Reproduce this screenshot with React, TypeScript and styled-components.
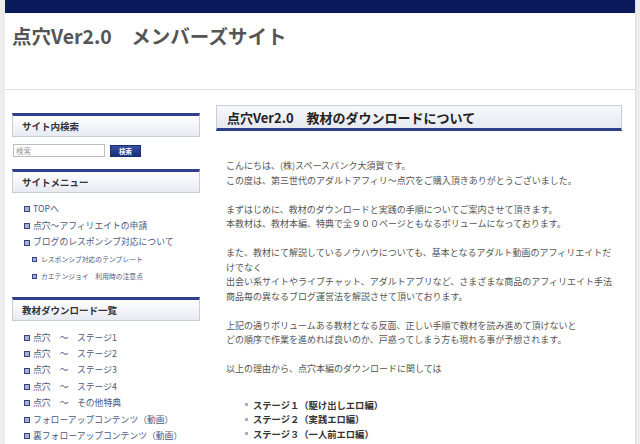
import React from "react";
import styled, { createGlobalStyle } from "styled-components";

const GlobalStyle = createGlobalStyle`
  html, body { margin: 0; padding: 0; }
  body {
    background: #ececec;
    font-family: "Noto Sans CJK JP", "Noto Sans", sans-serif;
  }
  * { box-sizing: border-box; }
`;

const Page = styled.div`
  width: 631px;
  margin-left: 5px;
  min-height: 444px;
  background: #fff;
  border-right: 1px solid #dedede;
  overflow: hidden;
`;

const TopBar = styled.div`
  height: 13px;
  background: #0b1a5b;
`;

const Header = styled.header`
  height: 77px;
  border-bottom: 1px solid #dddddd;
  padding: 12px 0 0 7px;
`;

const SiteTitle = styled.h1`
  margin: 0;
  font-size: 19.5px;
  line-height: 22px;
  font-weight: bold;
  color: #555;
`;

const Body = styled.div`
  display: flex;
  gap: 16px;
  padding: 0 14px 0 7px;
`;

const Sidebar = styled.aside`
  width: 188px;
  flex: none;
  padding-top: 23px;
`;

const SideHeading = styled.h2<{ $mt?: number }>`
  margin: ${(p) => p.$mt ?? 0}px 0 0;
  height: 24px;
  border: 1px solid #c9cdd8;
  border-top: 3px solid #2d3f8c;
  background: linear-gradient(#ffffff, #e7eaf2);
  padding-left: 9px;
  display: flex;
  align-items: center;
  font-size: 9.5px;
  font-weight: bold;
  color: #333;
`;

const SearchRow = styled.div`
  display: flex;
  align-items: center;
  gap: 5px;
  margin: 7px 0 0 1px;
`;

const SearchInput = styled.input`
  width: 92px;
  height: 13px;
  border: 1px solid #bdbdbd;
  padding: 0 2px;
  font-family: inherit;
  font-size: 7.5px;
  color: #333;
  &::placeholder { color: #999; }
`;

const SearchButton = styled.button`
  width: 31px;
  height: 12px;
  padding: 0;
  border: 1px solid #1a2c70;
  background: linear-gradient(#3550a3, #1b2f7a);
  color: #fff;
  font-family: inherit;
  font-size: 6.5px;
  font-weight: bold;
  line-height: 10px;
`;

const MenuList = styled.ul<{ $pt: number; $lh: number }>`
  list-style: none;
  margin: 0;
  padding: ${(p) => p.$pt}px 0 0 0;
  & > li { line-height: ${(p) => p.$lh}px; }
`;

const Bullet = styled.span`
  display: inline-block;
  width: 6px;
  height: 6px;
  border: 1.5px solid #34457e;
  background: #a7b1cf;
  margin-right: 4px;
  vertical-align: 0px;
  flex: none;
`;

const MenuItem = styled.li<{ $sub?: boolean }>`
  display: flex;
  align-items: center;
  padding-left: ${(p) => (p.$sub ? 20 : 12)}px;
  font-size: ${(p) => (p.$sub ? 6.8 : 8.8)}px;
  color: #4b5882;
  white-space: nowrap;
  & > ${Bullet} {
    width: ${(p) => (p.$sub ? 5 : 6)}px;
    height: ${(p) => (p.$sub ? 5 : 6)}px;
    margin-right: ${(p) => (p.$sub ? 4 : 3)}px;
  }
`;

const Main = styled.main`
  width: 406px;
  flex: none;
  padding-top: 15px;
`;

const MainHeading = styled.h2`
  margin: 0;
  height: 26px;
  border: 1px solid #c9ccd6;
  border-bottom: 3px solid #2c3f8c;
  background: linear-gradient(#f7f8fb, #e6e9f1);
  padding-left: 10px;
  display: flex;
  align-items: center;
  font-size: 13px;
  font-weight: bold;
  color: #222;
`;

const Article = styled.div`
  width: 402px;
  padding: 28px 0 0 10px;
  font-size: 9px;
  line-height: 14.5px;
  color: #555;
`;

const Para = styled.p`
  margin: 0 0 14.5px;
`;

const StageList = styled.ul`
  list-style: none;
  margin: 21px 0 0;
  padding: 0 0 0 19px;
`;

const StageItem = styled.li`
  display: flex;
  align-items: center;
  line-height: 14.5px;
  font-size: 9.3px;
  font-weight: bold;
  color: #333;
  &::before {
    content: "";
    width: 3px;
    height: 3px;
    background: #b0b0b0;
    margin-right: 5px;
  }
`;

const siteMenu: { label: string; sub?: boolean }[] = [
  { label: "TOPへ" },
  { label: "点穴〜アフィリエイトの申請" },
  { label: "ブログのレスポンシブ対応について" },
  { label: "レスポンシブ対応のテンプレート", sub: true },
  { label: "カエテンジョイ　利用時の注意点", sub: true },
];

const downloads = [
  "点穴　〜　ステージ1",
  "点穴　〜　ステージ2",
  "点穴　〜　ステージ3",
  "点穴　〜　ステージ4",
  "点穴　〜　その他特典",
  "フォローアップコンテンツ（動画）",
  "裏フォローアップコンテンツ（動画）",
];

const stages = [
  "ステージ１（駆け出しエロ編）",
  "ステージ２（実践エロ編）",
  "ステージ３（一人前エロ編）",
];

export default function App() {
  return (
    <>
      <GlobalStyle />
      <Page>
        <TopBar />
        <Header>
          <SiteTitle>点穴Ver2.0　メンバーズサイト</SiteTitle>
        </Header>
        <Body>
          <Sidebar>
            <SideHeading>サイト内検索</SideHeading>
            <SearchRow>
              <SearchInput placeholder="検索" />
              <SearchButton>検索</SearchButton>
            </SearchRow>
            <SideHeading $mt={12}>サイトメニュー</SideHeading>
            <MenuList $pt={8} $lh={16.7}>
              {siteMenu.map((m) => (
                <MenuItem key={m.label} $sub={m.sub}>
                  <Bullet />
                  {m.label}
                </MenuItem>
              ))}
            </MenuList>
            <SideHeading $mt={12}>教材ダウンロード一覧</SideHeading>
            <MenuList $pt={9} $lh={16.4}>
              {downloads.map((d) => (
                <MenuItem key={d}>
                  <Bullet />
                  {d}
                </MenuItem>
              ))}
            </MenuList>
          </Sidebar>
          <Main>
            <MainHeading>点穴Ver2.0　教材のダウンロードについて</MainHeading>
            <Article>
              <Para>
                こんにちは、(株)スペースバンク大須賀です。
                <br />
                この度は、第三世代のアダルトアフィリ〜点穴をご購入頂きありがとうございました。
              </Para>
              <Para>
                まずはじめに、教材のダウンロードと実践の手順についてご案内させて頂きます。
                <br />
                本教材は、教材本編、特典で全９００ページともなるボリュームになっております。
              </Para>
              <Para>
                また、教材にて解説しているノウハウについても、基本となるアダルト動画のアフィリエイトだけでなく
                <br />
                出会い系サイトやライブチャット、アダルトアプリなど、さまざまな商品のアフィリエイト手法
                <br />
                商品毎の異なるブログ運営法を解説させて頂いております。
              </Para>
              <Para>
                上記の通りボリュームある教材となる反面、正しい手順で教材を読み進めて頂けないと
                <br />
                どの順序で作業を進めれば良いのか、戸惑ってしまう方も現れる事が予想されます。
              </Para>
              <Para style={{ marginBottom: 0 }}>以上の理由から、点穴本編のダウンロードに関しては</Para>
              <StageList>
                {stages.map((s) => (
                  <StageItem key={s}>{s}</StageItem>
                ))}
              </StageList>
            </Article>
          </Main>
        </Body>
      </Page>
    </>
  );
}
